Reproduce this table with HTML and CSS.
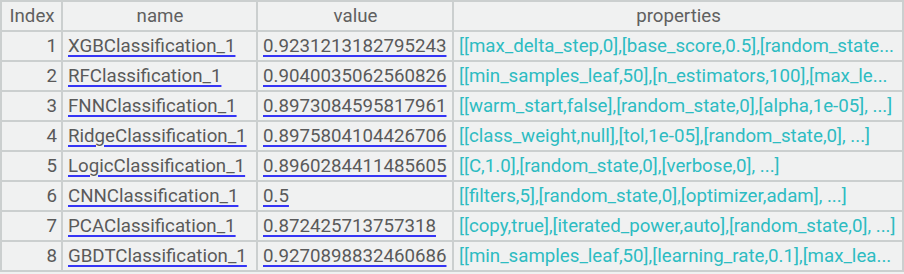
FILE: index.html
```html
<!DOCTYPE html>
<html>
<head>
<meta charset="utf-8">
<link rel="stylesheet" href="styles.css">
</head>
<body>
<table class="grid">
  <colgroup>
    <col class="c-index"><col class="c-name"><col class="c-value"><col class="c-props">
  </colgroup>
  <thead>
    <tr><th>Index</th><th>name</th><th>value</th><th>properties</th></tr>
  </thead>
  <tbody>
    <tr><td class="idx">1</td><td><span class="link">XGBClassification_1</span></td><td><span class="link">0.9231213182795243</span></td><td class="props">[[max_delta_step,0],[base_score,0.5],[random_state...</td></tr>
    <tr><td class="idx">2</td><td><span class="link">RFClassification_1</span></td><td><span class="link">0.9040035062560826</span></td><td class="props">[[min_samples_leaf,50],[n_estimators,100],[max_le...</td></tr>
    <tr><td class="idx">3</td><td><span class="link">FNNClassification_1</span></td><td><span class="link">0.8973084595817961</span></td><td class="props">[[warm_start,false],[random_state,0],[alpha,1e-05], ...]</td></tr>
    <tr><td class="idx">4</td><td><span class="link">RidgeClassification_1</span></td><td><span class="link">0.8975804104426706</span></td><td class="props">[[class_weight,null],[tol,1e-05],[random_state,0], ...]</td></tr>
    <tr><td class="idx">5</td><td><span class="link">LogicClassification_1</span></td><td><span class="link">0.8960284411485605</span></td><td class="props">[[C,1.0],[random_state,0],[verbose,0], ...]</td></tr>
    <tr><td class="idx">6</td><td><span class="link">CNNClassification_1</span></td><td><span class="link">0.5</span></td><td class="props">[[filters,5],[random_state,0],[optimizer,adam], ...]</td></tr>
    <tr><td class="idx">7</td><td><span class="link">PCAClassification_1</span></td><td><span class="link">0.872425713757318</span></td><td class="props">[[copy,true],[iterated_power,auto],[random_state,0], ...]</td></tr>
    <tr><td class="idx">8</td><td><span class="link">GBDTClassification_1</span></td><td><span class="link">0.9270898832460686</span></td><td class="props">[[min_samples_leaf,50],[learning_rate,0.1],[max_lea...</td></tr>
  </tbody>
</table>
</body>
</html>
```
FILE: styles.css
```css
html, body {
  margin: 0;
  padding: 0;
  background: #f0f1f1;
}
body {
  font-family: Roboto, "Liberation Sans", sans-serif;
  font-size: 18.7px;
}
.grid {
  border-collapse: collapse;
  table-layout: fixed;
  width: 902px;
}
.c-index { width: 61px; }
.c-name { width: 195px; }
.c-value { width: 196px; }
.c-props { width: 450px; }
.grid tr {
  height: 30px;
}
.grid th, .grid td {
  border: 2px solid #cbcfcf;
  padding: 0 4px 0 5px;
  white-space: nowrap;
  overflow: hidden;
  line-height: 20px;
}
.grid th {
  font-weight: normal;
  color: #606060;
  text-align: center;
}
.grid td {
  color: #5a5a5a;
}
.grid td.idx {
  text-align: right;
  padding-right: 4px;
}
.link {
  color: #5a5a5a;
  text-decoration: underline;
  text-decoration-color: #3535f5;
  text-decoration-thickness: 2px;
  text-underline-offset: 3px;
}
.grid td.props {
  color: #2dbcc2;
}
```
